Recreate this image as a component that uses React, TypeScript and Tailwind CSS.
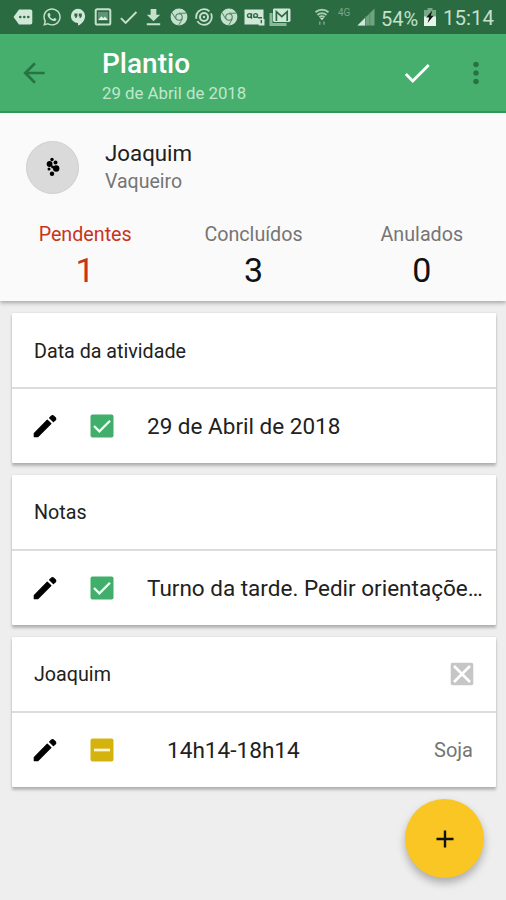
import React from 'react'
import clsx from 'clsx'
import { FaWhatsapp } from 'react-icons/fa'
import {
  MdArrowBack,
  MdCheck,
  MdFileDownload,
  MdMoreVert
} from 'react-icons/md'

type BoxState = 'checked' | 'partial'

interface Stat {
  label: string
  value: number
  highlighted?: boolean
}

interface ActivityCardProps {
  title: string
  state: BoxState
  removable?: boolean
  children: React.ReactNode
}

const stats: Stat[] = [
  { label: 'Pendentes', value: 1, highlighted: true },
  { label: 'Concluídos', value: 3 },
  { label: 'Anulados', value: 0 }
]

const ChromeIcon = () => (
  <svg viewBox="0 0 18 18" className="size-[18px]">
    <circle cx="9" cy="9" r="8.4" fill="#c5e0cd" />
    <circle cx="9" cy="9" r="3.8" fill="#4b8560" />
    <circle cx="9" cy="9" r="2.7" fill="#c5e0cd" />
    <path
      d="M9 5.2h7.5M5.7 10.9 2 4.6M12.3 10.9 8.6 17.3"
      stroke="#4b8560"
      strokeWidth="1"
    />
  </svg>
)

const MessageIcon = () => (
  <svg viewBox="0 0 20 16" className="h-4 w-5">
    <path
      d="M6 .5h11.5A1.8 1.8 0 0 1 19.3 2.3v11.4a1.8 1.8 0 0 1-1.8 1.8H6L.5 8z"
      fill="#d0e8d7"
    />
    <circle cx="7.3" cy="8" r="1.3" fill="#2a6b42" />
    <circle cx="11.3" cy="8" r="1.3" fill="#2a6b42" />
    <circle cx="15.3" cy="8" r="1.3" fill="#2a6b42" />
  </svg>
)

const HangoutsIcon = () => (
  <svg viewBox="0 0 16 18" className="h-[18px] w-4">
    <path
      d="M8 .8a7.1 7.1 0 0 0 0 14.2v2.6c4-1.8 7.1-5.4 7.1-9.7A7.1 7.1 0 0 0 8 .8z"
      fill="#d0e8d7"
    />
    <path
      d="M4.4 5.5h3v2.8L6.2 9.9H5L5.6 8.5H4.4zM8.8 5.5h3v2.8l-1.2 1.6H9.4L10 8.5H8.8z"
      fill="#2a6b42"
    />
  </svg>
)

const PictureIcon = () => (
  <svg viewBox="0 0 18 18" className="size-[18px]">
    <rect
      x="1.7"
      y="1.2"
      width="14.6"
      height="15.4"
      rx="1.6"
      fill="none"
      stroke="#c5e0cd"
      strokeWidth="2"
    />
    <path d="M4 4h10v8.5H4z" fill="#c5e0cd" opacity=".35" />
    <path d="m4.3 12 3-3.8 2 2 1.7-1.6 2.8 3.4z" fill="#e2f2e6" />
  </svg>
)

const TargetIcon = () => (
  <svg viewBox="0 0 18 18" className="size-[18px]" fill="none">
    <circle
      cx="9"
      cy="9"
      r="7.8"
      stroke="#c5e0cd"
      strokeWidth="1.8"
      strokeDasharray="20 2.5"
    />
    <circle cx="9" cy="9" r="4" stroke="#c5e0cd" strokeWidth="2" />
    <circle cx="9" cy="9" r="1.2" fill="#c5e0cd" />
  </svg>
)

const VoicemailIcon = () => (
  <svg viewBox="0 0 21 18" className="h-[18px] w-[21px]">
    <path d="M.5 1.5h19v9.5h1v6.5h-5.8v-1H.5z" fill="#d0e8d7" />
    <g fill="none" stroke="#2a6b42" strokeWidth="1.4">
      <circle cx="5.4" cy="7.5" r="1.9" />
      <path d="M7.5 5.2v5.5M9.5 9.4h4" />
      <circle cx="11.6" cy="7.5" r="1.9" />
      <path d="M14 9.8h4M17.3 12v3.2" />
    </g>
  </svg>
)

const GmailIcon = () => (
  <svg viewBox="0 0 22 18" className="h-[18px] w-[22px]">
    <path d="M2 5v11.5h15.5" stroke="#8db99a" strokeWidth="3" fill="none" />
    <rect x="4" y=".5" width="17.5" height="13.5" rx="1.4" fill="#d0e8d7" />
    <path
      d="M7.4 13V3.6l5.4 5 5.4-5V13"
      stroke="#2a6b42"
      strokeWidth="1.7"
      fill="none"
    />
  </svg>
)

const WifiIcon = () => (
  <svg viewBox="0 0 16 18" className="h-[18px] w-4">
    <g fill="none" stroke="#a5cdb1" strokeWidth="2">
      <path d="M1.5 4.2C5 .9 11 .9 14.5 4.2" />
      <path d="M3.5 6.9C6 4.7 10 4.7 12.5 6.9" />
      <path d="M5.4 9.3C7 8 9 8 10.6 9.3" />
    </g>
    <path d="m8 12.2-1.9-2.1h3.8z" fill="#d0e8d7" />
    <path d="M5.8 13.5v3.2M10 13.5v3.2" stroke="#7fae8d" strokeWidth="1.4" />
  </svg>
)

const SignalIcon = () => (
  <svg viewBox="0 0 18 18" className="size-[18px]">
    <path d="M17.5.5v17H.5z" fill="#6ea57f" />
    <path d="M8 10v7.5H.5z" fill="#d0e8d7" />
    <path d="M8.5 8v10M12.8 4v14" stroke="#4a8660" strokeWidth=".7" />
  </svg>
)

const BatteryIcon = () => (
  <svg viewBox="0 0 12 18" className="h-[18px] w-3">
    <path d="M3.5 0h5v2H12v7H0V2h3.5z" fill="#79a987" />
    <path d="M0 8.5h12V18H0z" fill="#e6f4ea" />
    <path d="M8.3 2.5 2.2 9.6h3L3.6 15l6-7.2H6.8z" fill="#111b14" />
  </svg>
)

const PencilIcon = () => (
  <svg viewBox="0 0 24 24" className="size-6 shrink-0">
    <g stroke="#000000" strokeWidth="1.2" strokeLinejoin="round">
      <path d="M1.3 22.7v-3.3L14.3 6.1l3.6 3.5L4.9 22.7z" />
      <path d="m16.6 3.9 2-2q.9-.7 1.800 0l2.100 2.100q.7.900 0 1.700L20.400 7.600z" />
    </g>
  </svg>
)

const StatusBar = () => (
  <div className="flex h-[34px] items-center bg-[#2a6b42] pl-[13px] text-[#c5e0cd]">
    <div className="flex shrink-0 items-center">
      <MessageIcon />
      <FaWhatsapp className="ml-[9px] size-5" />
      <div className="ml-[8px]">
        <HangoutsIcon />
      </div>
      <div className="ml-[8px]">
        <PictureIcon />
      </div>
      <MdCheck className="ml-[5px] size-[23px]" />
      <MdFileDownload className="ml-[2px] size-[23px]" />
      <div className="ml-[5px]">
        <ChromeIcon />
      </div>
      <div className="ml-[7px]">
        <TargetIcon />
      </div>
      <div className="ml-[7px]">
        <ChromeIcon />
      </div>
      <div className="ml-[6px]">
        <VoicemailIcon />
      </div>
      <div className="ml-[4px]">
        <GmailIcon />
      </div>
    </div>
    <div className="ml-[23px] flex shrink-0 items-center">
      <WifiIcon />
      <span className="mb-2 ml-[8px] w-[19px] text-[10px] leading-none text-[#77a886]">
        4G
      </span>
      <SignalIcon />
      <span className="mt-[3px] ml-[6px] w-[43px] text-[20px] leading-none whitespace-nowrap">
        54%
      </span>
      <BatteryIcon />
      <span className="mt-[3px] ml-[7px] text-[20.5px] leading-none">15:14</span>
    </div>
  </div>
)

const AppBar = () => (
  <header className="flex h-[79px] items-center border-b-2 border-[#2d9c5b] bg-[#46af6d] pl-[18px]">
    <MdArrowBack className="size-8 text-[#277343]" />
    <div className="ml-[52px] w-[298px] pt-[6px]">
      <h1 className="text-[28px] leading-[34px] font-medium text-white">
        Plantio
      </h1>
      <p className="text-[16.8px] leading-[24px] text-[#c0e7cd]">
        29 de Abril de 2018
      </p>
    </div>
    <MdCheck className="mt-px size-[34px] text-white" />
    <MdMoreVert className="mt-px ml-[25px] size-[34px] text-[#277343]" />
  </header>
)

const Profile = () => (
  <div className="flex items-center pt-[26px] pl-[26px]">
    <div className="flex size-[53px] items-center justify-center rounded-full border border-[#cfcfcf] bg-[#dadada]">
      <svg viewBox="0 0 14 20" className="-mt-0.5 h-5 w-3.5">
        <circle cx="6" cy="2.5" r="1.7" />
        <circle cx="3.6" cy="7" r="2.9" />
        <circle cx="9.5" cy="5.5" r="2" />
        <circle cx="10.2" cy="11.5" r="3.2" />
        <circle cx="3" cy="12" r="1.5" />
        <circle cx="6" cy="16.8" r="2.2" />
        <circle cx="6.5" cy="10" r="1.4" />
      </svg>
    </div>
    <div className="ml-[26px]">
      <div className="text-[22.3px] leading-[28px] text-[#212121]">Joaquim</div>
      <div className="text-[19.5px] leading-[29px] text-[#757575]">Vaqueiro</div>
    </div>
  </div>
)

const Stats = () => (
  <div className="mt-[22px] grid grid-cols-3 pl-px">
    {stats.map(({ label, value, highlighted }) => (
      <div
        key={label}
        className={clsx(
          'flex flex-col items-center',
          highlighted ? 'text-[#c8341b]' : 'text-[#111111]'
        )}
      >
        <span
          className={clsx(
            'text-[19.7px] leading-[34px]',
            !highlighted && 'text-[#757575]'
          )}
        >
          {label}
        </span>
        <span className="text-[34px] leading-[36px]">{value}</span>
      </div>
    ))}
  </div>
)

const StateBox = ({ state }: { state: BoxState }) => (
  <svg viewBox="0 0 24 24" className="size-6" fill="none">
    <rect
      x=".5"
      y=".5"
      width="23"
      height="23"
      rx="2"
      fill={state === 'checked' ? '#41af6b' : '#d5b30e'}
    />
    {state === 'checked' ? (
      <path d="m4 12 5.4 5.3L20 6.8" stroke="#f4fff7" strokeWidth="2.3" />
    ) : (
      <path d="M4 12h16" stroke="#fbf5d5" strokeWidth="2.7" />
    )}
  </svg>
)

const RemoveBox = () => (
  <svg viewBox="0 0 24 24" className="size-6">
    <rect x=".7" y=".7" width="22.6" height="22.6" rx="2" fill="#c6c6c6" />
    <path d="m4 4 16 16M20 4 4 20" stroke="#ffffff" strokeWidth="2.6" />
  </svg>
)

const ActivityCard: React.FC<ActivityCardProps> = ({
  title,
  state,
  removable,
  children
}) => (
  <section className="flex h-[150px] flex-col rounded-[1px] bg-white shadow-[0_3px_3px_rgba(0,0,0,0.24),0_0_2px_rgba(0,0,0,0.12)]">
    <div className="flex h-[76px] items-center justify-between border-b-2 border-[#dcdcdc] px-[22px]">
      <h2 className="pt-[3px] text-[19.7px] text-[#212121]">{title}</h2>
      {removable && <RemoveBox />}
    </div>
    <div className="flex flex-1 items-center pr-[23px] pl-[21px]">
      <PencilIcon />
      <div className="mr-[33px] ml-[33px] shrink-0">
        <StateBox state={state} />
      </div>
      {children}
    </div>
  </section>
)

export default function App() {
  return (
    <div className="relative h-[900px] w-[506px] overflow-hidden bg-[#eeeeee] font-['Roboto',sans-serif]">
      <StatusBar />
      <AppBar />
      <div className="h-[188px] bg-[#fafafa] shadow-[0_2px_4px_rgba(0,0,0,0.3)]">
        <Profile />
        <Stats />
      </div>
      <main className="flex flex-col gap-[11.75px] pt-3 pr-[10px] pl-3">
        <ActivityCard title="Data da atividade" state="checked">
          <span className="pt-[2px] text-[22.5px] text-[#212121]">
            29 de Abril de 2018
          </span>
        </ActivityCard>
        <ActivityCard title="Notas" state="checked">
          <span className="pt-[3px] text-[22.5px] whitespace-nowrap text-[#212121]">
            Turno da tarde. Pedir orientaçõe…
          </span>
        </ActivityCard>
        <ActivityCard title="Joaquim" state="partial" removable>
          <span className="ml-5 pt-[3px] text-[22.6px] text-[#212121]">
            14h14-18h14
          </span>
          <span className="ml-auto pt-px text-[20px] text-[#757575]">Soja</span>
        </ActivityCard>
      </main>
      <button
        aria-label="Adicionar"
        className="absolute top-[799px] left-[405px] flex size-[79px] items-center justify-center rounded-full bg-[#f9c623] shadow-[0_5px_8px_rgba(0,0,0,0.28)]"
      >
        <svg viewBox="0 0 18 18" className="size-[18px]">
          <path d="M9 .5v17M.5 9h17" stroke="#111111" strokeWidth="2.4" />
        </svg>
      </button>
    </div>
  )
}
